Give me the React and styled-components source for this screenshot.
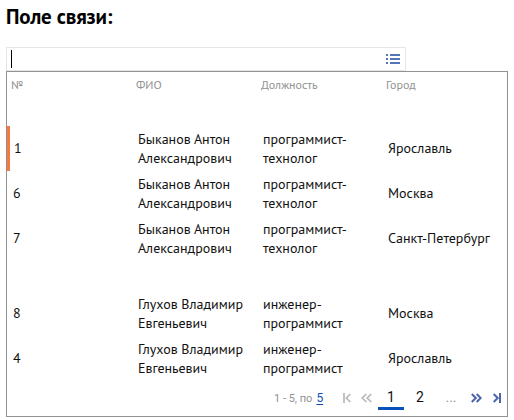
import React from "react";
import styled, { createGlobalStyle } from "styled-components";

const GlobalStyle = createGlobalStyle`
  * { box-sizing: border-box; }
  body { margin: 0; background: #fff; color: #111; font-family: "PT Sans", "Noto Sans", sans-serif; overflow: hidden; }
`;

const Page = styled.main`
  padding: 0 6px;
  width: 514px;
  height: 420px;
`;

const Title = styled.h1`
  margin: 0;
  height: 47px;
  padding-top: 4px;
  font-size: 21px;
  line-height: 26px;
  font-weight: 700;
  letter-spacing: -0.15px;
  color: #000;
  white-space: nowrap;
`;

const Field = styled.div`
  display: flex;
  align-items: center;
  justify-content: space-between;
  width: 400px;
  height: 24px;
  padding: 0 5px 0 4px;
  border: 1px solid #e6e6e6;
`;

const Caret = styled.span`
  width: 1px;
  height: 18px;
  background: #000;
`;

const Dropdown = styled.section`
  width: 502px;
  height: 346px;
  border: 1px solid #929292;
`;

const columns = "125px 125px 125px 1fr";

const HeaderRow = styled.div`
  display: grid;
  grid-template-columns: ${columns};
  height: 54px;
  padding: 4px 0 0 4px;
  font-size: 12px;
  line-height: 17px;
  color: #929292;
`;

const Row = styled.div`
  display: grid;
  grid-template-columns: ${columns};
  align-items: center;
  height: 45px;
  margin-top: ${(p) => (p.$gap ? 30 : 0)}px;
  padding-left: ${(p) => (p.$active ? 3 : 6)}px;
  border-left: ${(p) => (p.$active ? "3px solid #f87840" : "0")};
  font-size: 14px;
  line-height: 19px;
`;

const Text = styled.span`
  white-space: pre-line;
`;

const RowNumber = styled.span`
  padding-left: ${(p) => (p.$active ? 1 : 0)}px;
`;

const Footer = styled.footer`
  display: flex;
  height: 35px;
  padding-left: 267px;
  font-family: Roboto, sans-serif;
`;

const Range = styled.div`
  width: 69px;
  padding-top: 8px;
  font-size: 11px;
  line-height: 18px;
  color: #929292;
  white-space: nowrap;
`;

const Total = styled.a`
  margin-left: 4px;
  font-size: 12px;
  color: #0b50b5;
  text-decoration: underline;
  text-underline-offset: 2px;
`;

const Arrow = styled.span`
  width: ${(p) => p.$width}px;
  padding-top: 12px;
  color: ${(p) => (p.$muted ? "#b8b8b8" : "#4b66aa")};
  svg { display: block; }
`;

const NextArrows = styled.div`
  display: flex;
  gap: 11px;
  margin-left: 5px;
`;

const PageNumber = styled.span`
  width: ${(p) => p.$width}px;
  height: 29px;
  padding-top: 6px;
  border-bottom: 3px solid ${(p) => (p.$current ? "#0750bd" : "transparent")};
  text-align: center;
  font-size: 14px;
  line-height: 20px;
  color: ${(p) => (p.$muted ? "#999" : "#111")};
`;

function ListIcon() {
  return (
    <svg width="14" height="10" viewBox="0 0 14 10" fill="#5475b8" shapeRendering="crispEdges">
      {[0, 4, 8].map((y) => (
        <g key={y}>
          <rect x="0" y={y} width="2" height="2" />
          <rect x="4" y={y} width="10" height="2" />
        </g>
      ))}
    </svg>
  );
}

function PagerIcon({ edge, next }) {
  const width = edge ? 8 : 11;
  return (
    <svg width={width} height="10" viewBox={`0 0 ${width} 10`} fill="none" stroke="currentColor" strokeWidth={next ? 2 : 1.7}>
      <g transform={next ? `translate(${width} 0) scale(-1 1)` : undefined}>
        {edge ? <path d="M1 0v10M7.3 1 3.3 5l4 4" /> : <path d="M5.3 1 1.3 5l4 4M10.2 1 6.2 5l4 4" />}
      </g>
    </svg>
  );
}

const headers = ["№", "ФИО", "Должность", "Город"];

const anton = "Быканов Антон\nАлександрович";
const vladimir = "Глухов Владимир\nЕвгеньевич";
const technologist = "программист-\nтехнолог";
const engineer = "инженер-\nпрограммист";

const people = [
  { id: 1, name: anton, job: technologist, city: "Ярославль", active: true },
  { id: 6, name: anton, job: technologist, city: "Москва" },
  { id: 7, name: anton, job: technologist, city: "Санкт-Петербург" },
  { id: 8, name: vladimir, job: engineer, city: "Москва", gap: true },
  { id: 4, name: vladimir, job: engineer, city: "Ярославль" },
];

export default function App() {
  return (
    <>
      <GlobalStyle />
      <Page>
        <Title>Поле связи:</Title>
        <Field><Caret /><ListIcon /></Field>
        <Dropdown>
          <HeaderRow>
            {headers.map((label) => <Text key={label}>{label}</Text>)}
          </HeaderRow>
          {people.map((p) => (
            <Row key={p.id} $active={p.active} $gap={p.gap}>
              <RowNumber $active={p.active}>{p.id}</RowNumber>
              <Text>{p.name}</Text>
              <Text>{p.job}</Text>
              <Text>{p.city}</Text>
            </Row>
          ))}
          <Footer>
            <Range>1 - 5, по<Total>5</Total></Range>
            <Arrow $width={18} $muted><PagerIcon edge /></Arrow>
            <Arrow $width={17} $muted><PagerIcon /></Arrow>
            <PageNumber $width={26} $current>1</PageNumber>
            <PageNumber $width={32}>2</PageNumber>
            <PageNumber $width={30} $muted>...</PageNumber>
            <NextArrows>
              <Arrow $width={11}><PagerIcon next /></Arrow>
              <Arrow $width={8}><PagerIcon edge next /></Arrow>
            </NextArrows>
          </Footer>
        </Dropdown>
      </Page>
    </>
  );
}
